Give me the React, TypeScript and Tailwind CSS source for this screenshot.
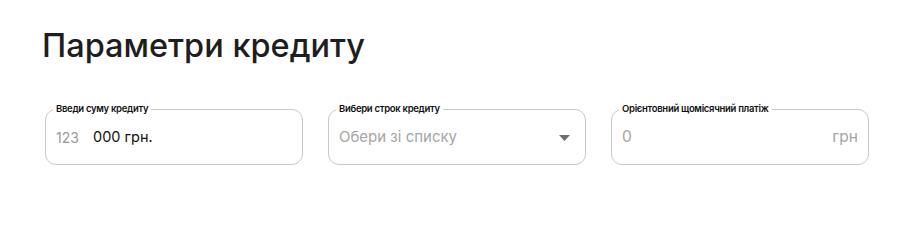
import React from "react";

function Field({
  label,
  children,
}: {
  label: string;
  children: React.ReactNode;
}) {
  return (
    <fieldset className="w-[258px] h-[62px] rounded-[11px] border border-[#c9c9c9] px-[7px] pb-0 m-0 min-w-0">
      <legend className="px-[3px] text-[9.5px] leading-[12px] font-semibold text-[#111] tracking-[-0.3px]">
        {label}
      </legend>
      <div className="flex items-center h-[46px] -mt-[1px] px-[3px]">{children}</div>
    </fieldset>
  );
}

export default function App() {
  return (
    <div
      className="w-[922px] h-[207px] bg-white pt-[26px] pl-[42px]"
      style={{ fontFamily: '"Inter", "Noto Sans", sans-serif' }}
    >
      <h1 className="text-[32.5px] leading-[40px] font-medium text-[#1e1e1e] tracking-[0px]">
        Параметри кредиту
      </h1>
      <div className="flex gap-[25px] mt-[37px] ml-[3px]">
        <Field label="Введи суму кредиту">
          <span className="text-[14px] text-[#9a9a9a] w-[37px]">123</span>
          <span className="text-[14.5px] text-[#111]">000 грн.</span>
        </Field>
        <Field label="Вибери строк кредиту">
          <span className="text-[15px] text-[#a5a5a5] flex-1">Обери зі списку</span>
          <svg width="11" height="6" viewBox="0 0 11 6" className="mr-[5px] mt-[2px]">
            <path d="M0 0 L11 0 L5.5 6 Z" fill="#6f6f6f" />
          </svg>
        </Field>
        <Field label="Орієнтовний щомісячний платіж">
          <span className="text-[15.5px] text-[#a5a5a5] flex-1">0</span>
          <span className="text-[15.5px] text-[#a5a5a5]">грн</span>
        </Field>
      </div>
    </div>
  );
}
